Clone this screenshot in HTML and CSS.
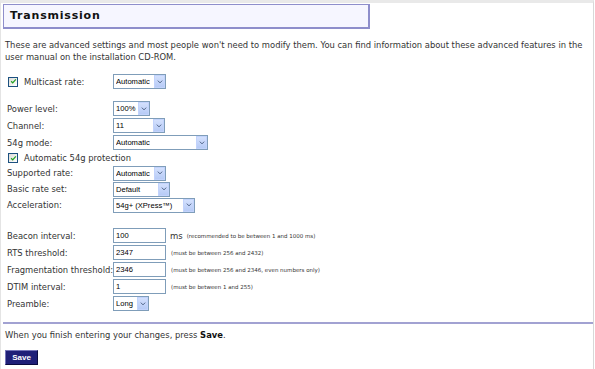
FILE: index.html
```html
<!DOCTYPE html>
<html lang="en">
<head>
    <meta charset="UTF-8">
    <title>Transmission</title>
    <link rel="stylesheet" href="styles.css">
</head>
<body>
<div class="page">

    <h1 class="page__title">Transmission</h1>

    <p class="intro">These are advanced settings and most people won't need to modify them. You can find information about these advanced features in the user manual on the installation CD-ROM.</p>

    <form class="settings">
        <div class="row">
            <label class="row__label row__label--check"><span class="check"><svg viewBox="0 0 9 9" width="7" height="7"><path d="M1.5 4.2 L3.5 6.3 L7.5 1.8" fill="none" stroke="#21a121" stroke-width="1.6"/></svg></span>Multicast rate:</label>
            <span class="dropdown dropdown--53"><select class="dropdown__field"><option>Automatic</option></select><span class="dropdown__arrow"><svg viewBox="0 0 7 5" width="6" height="4"><path d="M0.8 0.8 L3.5 3.6 L6.2 0.8" fill="none" stroke="#4d6185" stroke-width="1.2"/></svg></span></span>
        </div>

        <div class="row row--gap">
            <label class="row__label">Power level:</label>
            <span class="dropdown dropdown--37"><select class="dropdown__field"><option>100%</option></select><span class="dropdown__arrow"><svg viewBox="0 0 7 5" width="6" height="4"><path d="M0.8 0.8 L3.5 3.6 L6.2 0.8" fill="none" stroke="#4d6185" stroke-width="1.2"/></svg></span></span>
        </div>
        <div class="row">
            <label class="row__label">Channel:</label>
            <span class="dropdown dropdown--52"><select class="dropdown__field"><option>11</option></select><span class="dropdown__arrow"><svg viewBox="0 0 7 5" width="6" height="4"><path d="M0.8 0.8 L3.5 3.6 L6.2 0.8" fill="none" stroke="#4d6185" stroke-width="1.2"/></svg></span></span>
        </div>
        <div class="row">
            <label class="row__label">54g mode:</label>
            <span class="dropdown dropdown--95"><select class="dropdown__field"><option>Automatic</option></select><span class="dropdown__arrow"><svg viewBox="0 0 7 5" width="6" height="4"><path d="M0.8 0.8 L3.5 3.6 L6.2 0.8" fill="none" stroke="#4d6185" stroke-width="1.2"/></svg></span></span>
        </div>
        <div class="row row--short">
            <label class="row__label row__label--check row__label--wide"><span class="check"><svg viewBox="0 0 9 9" width="7" height="7"><path d="M1.5 4.2 L3.5 6.3 L7.5 1.8" fill="none" stroke="#21a121" stroke-width="1.6"/></svg></span>Automatic 54g protection</label>
        </div>
        <div class="row row--tight">
            <label class="row__label">Supported rate:</label>
            <span class="dropdown dropdown--53"><select class="dropdown__field"><option>Automatic</option></select><span class="dropdown__arrow"><svg viewBox="0 0 7 5" width="6" height="4"><path d="M0.8 0.8 L3.5 3.6 L6.2 0.8" fill="none" stroke="#4d6185" stroke-width="1.2"/></svg></span></span>
        </div>
        <div class="row row--tight">
            <label class="row__label">Basic rate set:</label>
            <span class="dropdown dropdown--57"><select class="dropdown__field"><option>Default</option></select><span class="dropdown__arrow"><svg viewBox="0 0 7 5" width="6" height="4"><path d="M0.8 0.8 L3.5 3.6 L6.2 0.8" fill="none" stroke="#4d6185" stroke-width="1.2"/></svg></span></span>
        </div>
        <div class="row row--tight">
            <label class="row__label">Acceleration:</label>
            <span class="dropdown dropdown--82"><select class="dropdown__field"><option>54g+ (XPress™)</option></select><span class="dropdown__arrow"><svg viewBox="0 0 7 5" width="6" height="4"><path d="M0.8 0.8 L3.5 3.6 L6.2 0.8" fill="none" stroke="#4d6185" stroke-width="1.2"/></svg></span></span>
        </div>

        <div class="row row--section">
            <label class="row__label">Beacon interval:</label>
            <input class="textbox" type="text" value="100">
            <span class="unit">ms</span><span class="hint">(recommended to be between 1 and 1000 ms)</span>
        </div>
        <div class="row">
            <label class="row__label">RTS threshold:</label>
            <input class="textbox" type="text" value="2347">
            <span class="hint">(must be between 256 and 2432)</span>
        </div>
        <div class="row">
            <label class="row__label">Fragmentation threshold:</label>
            <input class="textbox" type="text" value="2346">
            <span class="hint">(must be between 256 and 2346, even numbers only)</span>
        </div>
        <div class="row">
            <label class="row__label">DTIM interval:</label>
            <input class="textbox" type="text" value="1">
            <span class="hint">(must be between 1 and 255)</span>
        </div>
        <div class="row">
            <label class="row__label">Preamble:</label>
            <span class="dropdown dropdown--36"><select class="dropdown__field"><option>Long</option></select><span class="dropdown__arrow"><svg viewBox="0 0 7 5" width="6" height="4"><path d="M0.8 0.8 L3.5 3.6 L6.2 0.8" fill="none" stroke="#4d6185" stroke-width="1.2"/></svg></span></span>
        </div>
    </form>

    <hr class="divider">

    <p class="footer-note">When you finish entering your changes, press <b>Save</b>.</p>
    <button class="save-btn" type="button">Save</button>

</div>
</body>
</html>
```

FILE: styles.css
```css
/* Router admin page - Transmission settings */
:root {
    --text: #333333;
    --frame: #e4e4e4;
    --accent-border: #8e8ecb;
    --accent-bg: #f6f6ff;
    --field-border: #7f9db9;
    --font-ui: "DejaVu Sans", Verdana, sans-serif;
    --font-field: "Liberation Sans", Arial, sans-serif;
}

* { box-sizing: border-box; }

body {
    margin: 0;
    background: #ffffff;
    color: var(--text);
    font-family: var(--font-ui);
    font-size: 8.4px;
}

.page {
    width: 594px;
    height: 369px;
    border-top: 3px solid #e9e9e9;
    border-left: 1px solid var(--frame);
    border-right: 1px solid #d8d8d8;
}

/* Title box */
.page__title {
    width: 367px;
    height: 25px;
    margin: 1px 0 0 2px;
    padding: 0 0 0 6px;
    background: var(--accent-bg);
    border: 1px solid var(--accent-border);
    border-right-width: 2px;
    border-bottom-width: 2px;
    color: #111111;
    font-size: 11px;
    font-weight: bold;
    letter-spacing: 0.8px;
    line-height: 22px;
}

.intro {
    margin: 10px 0 0;
    padding: 0 4px;
    line-height: 12px;
}

/* Settings form */
.settings {
    display: flex;
    flex-direction: column;
    margin-top: 10px;
    padding-left: 6px;
}

.row {
    display: flex;
    align-items: center;
    height: 17px;
}

.row--gap { margin-top: 10px; }
.row--short { height: 14px; }
.row--tight { height: 16px; }
.row--section { margin-top: 14px; }

.row__label {
    flex: 0 0 106px;
    display: flex;
    align-items: center;
    white-space: nowrap;
}

.row__label--check { padding-left: 1px; }
.row__label--wide { flex-basis: auto; }

.check {
    display: inline-flex;
    align-items: center;
    justify-content: center;
    width: 10px;
    height: 10px;
    margin-right: 6px;
    border: 1px solid #1c5180;
    background: linear-gradient(135deg, #dcdcd7, #ffffff);
}

/* Dropdowns */
.dropdown {
    position: relative;
    display: inline-block;
    height: 15px;
}

.dropdown--36 { width: 36px; }
.dropdown--37 { width: 37px; }
.dropdown--52 { width: 52px; }
.dropdown--53 { width: 53px; }
.dropdown--57 { width: 57px; }
.dropdown--82 { width: 82px; }
.dropdown--95 { width: 95px; }

.dropdown__field {
    -webkit-appearance: none;
    appearance: none;
    width: 100%;
    height: 15px;
    margin: 0;
    padding: 0 0 0 2px;
    border: 1px solid var(--field-border);
    border-radius: 0;
    background: #ffffff;
    color: #000000;
    font-family: var(--font-field);
    font-size: 7.6px;
    line-height: 13px;
}

.dropdown__arrow {
    position: absolute;
    top: 1px;
    right: 1px;
    bottom: 1px;
    width: 11px;
    display: flex;
    align-items: center;
    justify-content: center;
    background: linear-gradient(#d3e0fd, #b7cbf6);
    border: 1px solid #c2d3fc;
    pointer-events: none;
}

/* Text inputs */
.textbox {
    width: 53px;
    height: 15px;
    margin: 0;
    padding: 0 2px;
    border: 1px solid var(--field-border);
    color: #000000;
    font-family: var(--font-field);
    font-size: 7.6px;
}

.unit {
    margin-left: 4px;
    font-size: 8.5px;
}

.hint {
    margin-left: 5px;
    font-size: 5.5px;
}

.unit + .hint { margin-left: 4px; }

.divider {
    height: 2px;
    margin: 10px 0 0 2px;
    border: 0;
    background: #a2a2d2;
}

.footer-note {
    margin: 5px 0 0;
    padding: 0 4px;
    line-height: 12px;
}

.footer-note b { color: #111111; }

.save-btn {
    display: block;
    width: 33px;
    height: 15px;
    margin: 9px 0 0 4px;
    padding: 0;
    background: #1f1f78;
    color: #ffffff;
    border: 1px solid;
    border-color: #7575b8 #0a0a40 #0a0a40 #7575b8;
    font-family: var(--font-field);
    font-size: 8px;
    font-weight: bold;
}
```
